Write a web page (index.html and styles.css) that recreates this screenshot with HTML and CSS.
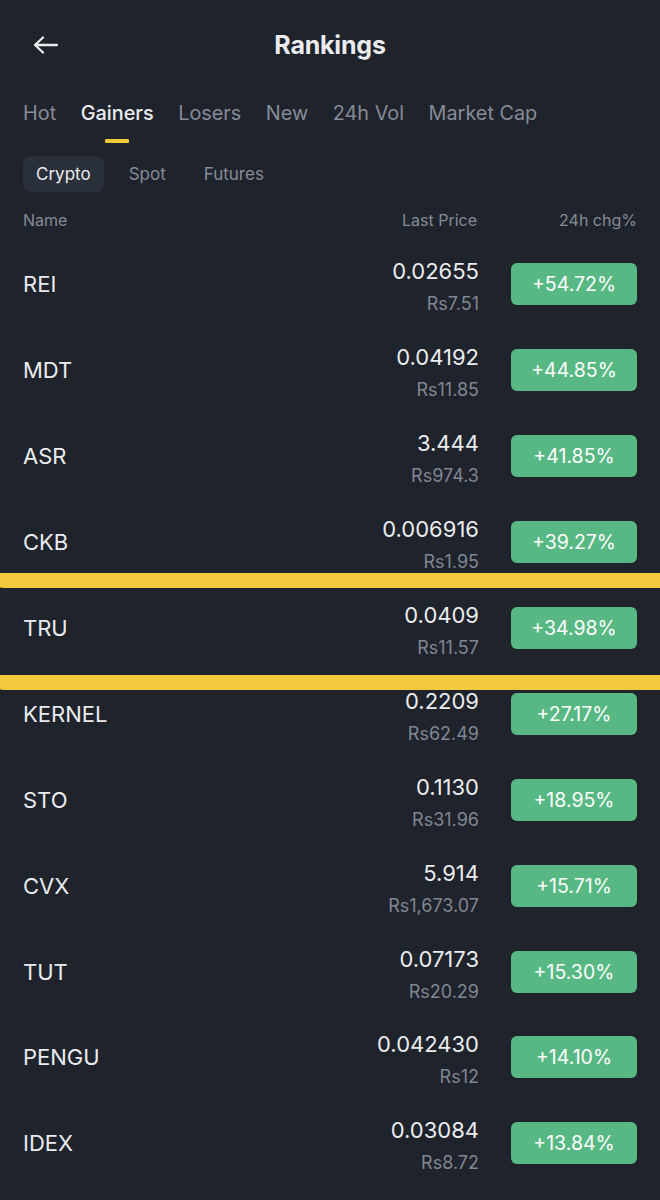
FILE: index.html
```html
<!DOCTYPE html>
<html>
<head>
<meta charset="utf-8">
<link rel="stylesheet" href="styles.css">
</head>
<body>
<div class="page">
  <header class="topbar">
    <div class="back">
      <svg width="25" height="18" viewBox="0 0 25 18"><path d="M24 9H2M10 1.5L2 9l8 7.5" fill="none" stroke="#eaecef" stroke-width="2.3" stroke-linecap="round" stroke-linejoin="round"/></svg>
    </div>
    <h1 class="title">Rankings</h1>
    <div></div>
  </header>

  <nav class="tabs">
    <div class="tab">Hot</div>
    <div class="tab active">Gainers<span class="bar"></span></div>
    <div class="tab">Losers</div>
    <div class="tab">New</div>
    <div class="tab">24h Vol</div>
    <div class="tab">Market Cap</div>
  </nav>

  <div class="subtabs">
    <div class="sub active">Crypto</div>
    <div class="sub">Spot</div>
    <div class="sub">Futures</div>
  </div>

  <div class="colhead">
    <span class="c-name">Name</span>
    <span class="c-price">Last Price</span>
    <span class="c-chg">24h chg%</span>
  </div>

  <div class="list">
    <div class="row"><div class="name">REI</div><div class="price"><div class="last">0.02655</div><div class="fiat">Rs7.51</div></div><div class="chg">+54.72%</div></div>
    <div class="row"><div class="name">MDT</div><div class="price"><div class="last">0.04192</div><div class="fiat">Rs11.85</div></div><div class="chg">+44.85%</div></div>
    <div class="row"><div class="name">ASR</div><div class="price"><div class="last">3.444</div><div class="fiat">Rs974.3</div></div><div class="chg">+41.85%</div></div>
    <div class="row"><div class="name">CKB</div><div class="price"><div class="last">0.006916</div><div class="fiat">Rs1.95</div></div><div class="chg">+39.27%</div></div>
    <div class="row"><div class="name">TRU</div><div class="price"><div class="last">0.0409</div><div class="fiat">Rs11.57</div></div><div class="chg">+34.98%</div></div>
    <div class="row"><div class="name">KERNEL</div><div class="price"><div class="last">0.2209</div><div class="fiat">Rs62.49</div></div><div class="chg">+27.17%</div></div>
    <div class="row"><div class="name">STO</div><div class="price"><div class="last">0.1130</div><div class="fiat">Rs31.96</div></div><div class="chg">+18.95%</div></div>
    <div class="row"><div class="name">CVX</div><div class="price"><div class="last">5.914</div><div class="fiat">Rs1,673.07</div></div><div class="chg">+15.71%</div></div>
    <div class="row"><div class="name">TUT</div><div class="price"><div class="last">0.07173</div><div class="fiat">Rs20.29</div></div><div class="chg">+15.30%</div></div>
    <div class="row"><div class="name">PENGU</div><div class="price"><div class="last">0.042430</div><div class="fiat">Rs12</div></div><div class="chg">+14.10%</div></div>
    <div class="row"><div class="name">IDEX</div><div class="price"><div class="last">0.03084</div><div class="fiat">Rs8.72</div></div><div class="chg">+13.84%</div></div>
  </div>

  <div class="marker marker-1"></div>
  <div class="marker marker-2"></div>
</div>
</body>
</html>
```

FILE: styles.css
```css
* { box-sizing: border-box; }
html, body {
  margin: 0;
  padding: 0;
  background: #1f232b;
}
body {
  font-family: "Inter", "Noto Sans", "Liberation Sans", sans-serif;
  color: #eaecef;
}
.page {
  position: relative;
  width: 660px;
  min-height: 1200px;
  overflow: hidden;
}

.topbar {
  height: 90px;
  display: grid;
  grid-template-columns: 1fr auto 1fr;
  align-items: center;
}
.back {
  padding-left: 33px;
  display: flex;
  align-items: center;
}
.back svg { display: block; }
.title {
  margin: 0;
  font-size: 25px;
  font-weight: 700;
  letter-spacing: -0.2px;
  color: #eaecef;
}

.tabs {
  display: flex;
  gap: 24.5px;
  padding: 10px 23px 0;
}
.tab {
  display: flex;
  flex-direction: column;
  align-items: center;
  font-size: 19.85px;
  line-height: 26px;
  color: #858c98;
  height: 43px;
}
.tab.active { color: #eaecef; font-weight: 500; }
.tab .bar {
  display: block;
  width: 24px;
  height: 4px;
  margin-top: 13px;
  background: #f0c93b;
  border-radius: 1px;
}

.subtabs {
  display: flex;
  gap: 12px;
  padding: 13px 23px 0;
}
.sub {
  height: 36px;
  line-height: 36px;
  padding: 0 13px;
  border-radius: 8px;
  font-size: 17px;
  color: #858c98;
}
.sub.active {
  background: #2a3039;
  color: #eaecef;
}

.colhead {
  display: flex;
  align-items: center;
  padding: 0 23px;
  margin-top: 18px;
  height: 20px;
  font-size: 16px;
  color: #848c98;
}
.c-name { flex: 1; }
.c-price { width: 200px; text-align: right; padding-right: 2px; }
.c-chg { width: 158px; text-align: right; }

.list { margin-top: 11.5px; }
.row {
  display: flex;
  align-items: center;
  height: 85.9px;
  padding: 0 23px 0 23px;
}
.name {
  flex: 1;
  font-size: 22px;
  font-weight: 400;
  color: #eaecef;
}
.price {
  text-align: right;
  margin-top: 4px;
}
.last {
  font-size: 22px;
  line-height: 28px;
  font-weight: 400;
  color: #eaecef;
}
.fiat {
  margin-top: 8px;
  font-size: 18px;
  line-height: 22px;
  color: #7f8793;
}
.chg {
  margin-left: 32px;
  width: 126px;
  height: 42px;
  line-height: 42px;
  border-radius: 6px;
  background: #58b883;
  color: #ffffff;
  text-align: center;
  font-size: 19.5px;
  font-weight: 400;
}

.marker {
  position: absolute;
  left: -4px;
  width: 670px;
  height: 15px;
  background: #f2c93c;
  border-radius: 3px 6px 4px 7px;
}
.marker-1 { top: 573px; }
.marker-2 { top: 675px; }
```
